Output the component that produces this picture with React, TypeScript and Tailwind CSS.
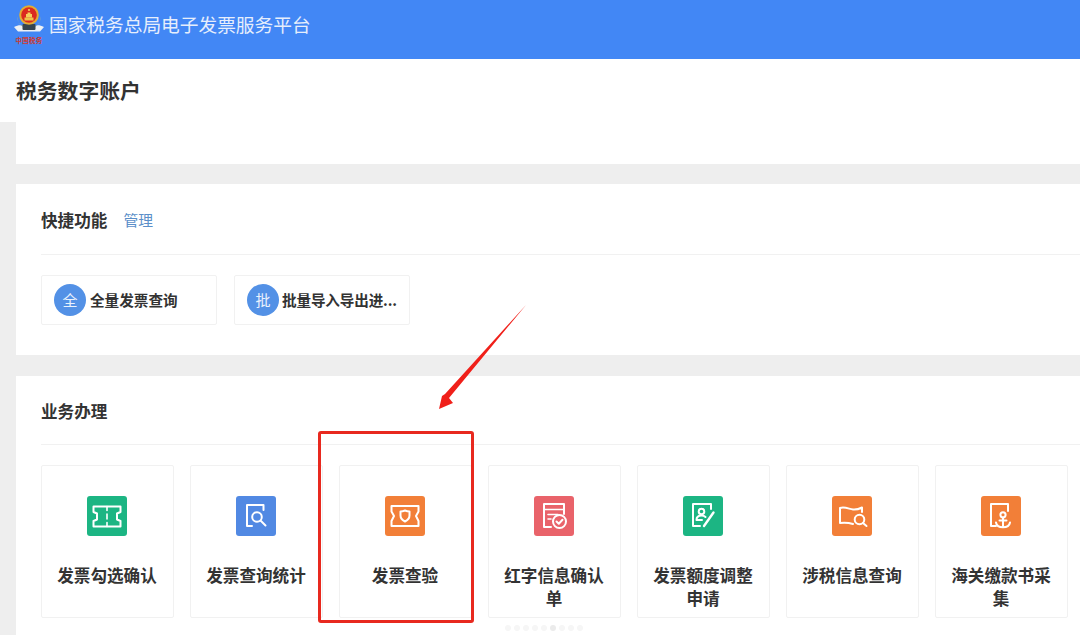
import React from "react";

const font = '"Noto Sans CJK SC","Noto Sans",sans-serif';
const S = { fill: "none", stroke: "#fff", strokeWidth: 2, strokeLinecap: "round" as const, strokeLinejoin: "round" as const };

function Ticket() {
  return (
    <svg viewBox="0 0 40 40" className="w-10 h-10">
      <path {...S} d="M6.5 10.5H33.5V16L30 17.5V23.5L33.5 25V30.5H6.5V25L10 23.5V17.5L6.5 16Z" />
      <path {...S} d="M20 10.5V14.5M20 18V23M20 26.5V30.5" strokeWidth={1.6} />
    </svg>
  );
}
function DocSearch() {
  return (
    <svg viewBox="0 0 40 40" className="w-10 h-10">
      <path {...S} d="M27.5 14V9H11V30H16" />
      <circle {...S} cx="21" cy="21" r="4.8" />
      <path {...S} d="M25 25L29.5 29.5" />
    </svg>
  );
}
function TicketShield() {
  return (
    <svg viewBox="0 0 40 40" className="w-10 h-10">
      <path {...S} d="M6.5 10H33.5V15.5L31 20L33.5 25V30H6.5V25L9 20L6.5 15.5Z" />
      <path {...S} d="M15.5 15.5C17.5 15.5 18.8 15 20 14.5C21.2 15 22.5 15.5 24.5 15.5V19.5C24.5 22.5 22 24.5 20 25.5C18 24.5 15.5 22.5 15.5 19.5Z" />
    </svg>
  );
}
function DocCheck() {
  return (
    <svg viewBox="0 0 40 40" className="w-10 h-10">
      <path {...S} d="M17 31H10V8H30V18" />
      <path {...S} d="M10 13.5H30M14 18.5H24M14 23H17" strokeWidth={1.6} />
      <circle {...S} cx="25.5" cy="25.5" r="6.5" />
      <path {...S} d="M22.5 25.5L24.8 27.8L28.5 23.8" />
    </svg>
  );
}
function DocPen() {
  return (
    <svg viewBox="0 0 40 40" className="w-10 h-10">
      <path {...S} d="M28 13V8H10V30H17" />
      <circle {...S} cx="18.5" cy="15.5" r="2.8" />
      <path {...S} d="M13.5 24C13.5 20.5 16 19.5 18.5 19.5C20 19.5 21.5 20 22.5 21M13.5 24H19" />
      <path {...S} d="M30.5 16.5L21 30" strokeWidth={2.4} />
    </svg>
  );
}
function MapSearch() {
  return (
    <svg viewBox="0 0 40 40" className="w-10 h-10">
      <path {...S} d="M21 28C16 26.5 12.5 26.5 8 27V12C13 10.5 17 13 21 13.5C24 13.8 27 13 30 11.5V16" />
      <circle {...S} cx="27.5" cy="23.5" r="4.8" />
      <path {...S} d="M31 27L34.5 30" />
    </svg>
  );
}
function DocAnchor() {
  return (
    <svg viewBox="0 0 40 40" className="w-10 h-10">
      <path {...S} d="M27 15V8H10V30H15" />
      <circle {...S} cx="22" cy="18.8" r="2.6" />
      <path {...S} d="M22 21.5V31" />
      <path {...S} d="M18.5 24.5H25.5" />
      <path {...S} d="M15 26.5C15.5 29.5 18.5 31.3 22 31.3C25.5 31.3 28.5 29.5 29 26.5" />
    </svg>
  );
}

function Logo() {
  return (
    <div className="w-[32px] flex flex-col items-center shrink-0">
      <svg viewBox="0 0 32 31" className="w-[32px] h-[31px]">
        <path d="M1 24C7 21 10 22 16 26C22 22 25 21 31 24L27 28.5H5Z" fill="#eef1f4" />
        <path d="M4 13C4 20 9 25 16 26C23 25 28 20 28 13L26 21L16 25L6 21Z" fill="#8fa9a8" />
        <rect x="9.5" y="21" width="13" height="6" rx="1" fill="#36454f" />
        <circle cx="16" cy="12" r="9.8" fill="#e3ad33" />
        <circle cx="16" cy="12" r="7.8" fill="#db2a1f" />
        <path d="M11.5 14.5H20.5V17.5H11.5Z" fill="#eec24a" />
        <path d="M13 14.5V11H19V14.5M14.5 9.5H17.5V11H14.5Z" fill="#f3cf5a" />
        <circle cx="16" cy="7" r="1.1" fill="#f3cf5a" />
      </svg>
      <div className="mt-[2px] text-[6.5px] leading-[9px] text-[#cf3a30] font-bold whitespace-nowrap tracking-[0.3px]">中国税务</div>
    </div>
  );
}

const items: { t: string; c: string; I: React.FC }[] = [
  { t: "发票勾选确认", c: "bg-[#1cb583]", I: Ticket },
  { t: "发票查询统计", c: "bg-[#5189e3]", I: DocSearch },
  { t: "发票查验", c: "bg-[#f27f38]", I: TicketShield },
  { t: "红字信息确认单", c: "bg-[#e9636a]", I: DocCheck },
  { t: "发票额度调整申请", c: "bg-[#1cb583]", I: DocPen },
  { t: "涉税信息查询", c: "bg-[#f27f38]", I: MapSearch },
  { t: "海关缴款书采集", c: "bg-[#f27f38]", I: DocAnchor },
];

function Quick({ g, t, tight }: { g: string; t: string; tight?: boolean }) {
  return (
    <div className="w-[176px] h-[50px] border border-[#f1f1f1] rounded-[2px] flex items-center pl-[12px] gap-[4px]">
      <div className="w-[32px] h-[32px] rounded-full bg-[#5391e6] text-[#eaf2fd] text-[15px] flex items-center justify-center shrink-0">{g}</div>
      <div className={tight ? "text-[14.6px] font-bold text-[#333] whitespace-nowrap -ml-[1px] tracking-[-0.15px]" : "text-[14.6px] font-bold text-[#333] whitespace-nowrap"}>{t}</div>
    </div>
  );
}

export default function App() {
  return (
    <div className="relative w-[1080px] h-[635px] overflow-hidden bg-white" style={{ fontFamily: font }}>
      <header className="h-[59px] bg-[#4287f5] flex items-start pl-[13px] pt-[3px] gap-[4px]">
        <Logo />
        <div className="text-[18.7px] leading-[42px] text-[#e6eefc] whitespace-nowrap">国家税务总局电子发票服务平台</div>
      </header>
      <div className="h-[63px] pl-[16px] flex items-center pt-[1px]">
        <h1 className="text-[20.8px] font-bold text-[#333]">税务数字账户</h1>
      </div>
      <main className="bg-[#eeeeee] pl-[16px] flex flex-col">
        <div className="h-[42px] bg-white" />
        <section className="mt-[20px] h-[171px] bg-white pl-[25px]">
          <div className="h-[71px] border-b border-[#f1f1f1] flex items-center gap-[16px] pt-[3px]">
            <span className="text-[16.6px] font-bold text-[#333]">快捷功能</span>
            <span className="text-[14.8px] text-[#5b8fc9]">管理</span>
          </div>
          <div className="flex gap-[17px] pt-[20px]">
            <Quick g="全" t="全量发票查询" />
            <Quick g="批" t="批量导入导出进..." tight />
          </div>
        </section>
        <section className="mt-[21px] h-[280px] bg-white pl-[25px]">
          <div className="h-[69px] border-b border-[#f1f1f1] flex items-center pt-[2px]">
            <span className="text-[16.6px] font-bold text-[#333]">业务办理</span>
          </div>
          <div className="flex gap-[16px] pt-[20px]">
            {items.map(({ t, c, I }) => (
              <div key={t} className="w-[133px] h-[153px] border border-[#f1f1f1] rounded-[2px] flex flex-col items-center pt-[30px] px-[14px] shrink-0">
                <div className={`w-10 h-10 mr-[1px] rounded-[3px] ${c}`}><I /></div>
                <div className="mt-[28px] mr-[1px] text-[16.6px] leading-[23px] font-bold text-[#333] text-center">{t}</div>
              </div>
            ))}
          </div>
        </section>
      </main>

      <div className="absolute left-[318px] top-[431px] w-[156px] h-[192px] border-[3px] border-[#e8291f] rounded-[3px]" />
      <svg className="absolute left-0 top-0 w-[1080px] h-[635px] pointer-events-none" viewBox="0 0 1080 635">
        <polygon points="526,305 449,398 453,403 439,409 442,396 445,394" fill="#f0201a" />
      </svg>
      <div className="absolute left-[505px] top-[625px] flex gap-[3px]">
        {[0, 1, 2, 3, 4, 5, 6, 7, 8].map((i) => (
          <div key={i} className={i === 5 ? "w-[6px] h-[6px] rounded-full bg-[#ebebeb]" : "w-[6px] h-[6px] rounded-full bg-[#f6f6f6]"} />
        ))}
      </div>
    </div>
  );
}
